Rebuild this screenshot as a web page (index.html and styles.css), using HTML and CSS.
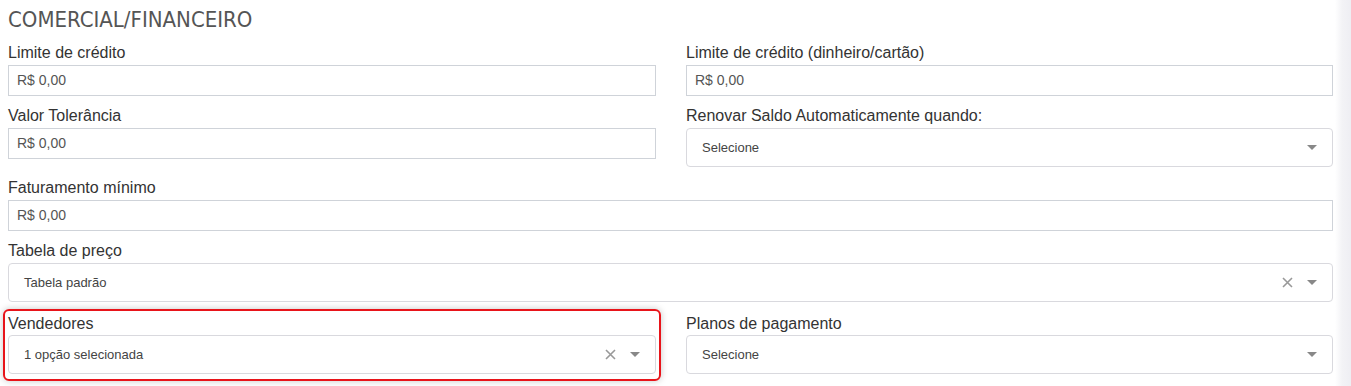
FILE: index.html
```html
<!DOCTYPE html>
<html lang="pt-BR">
<head>
<meta charset="utf-8">
<title>Comercial/Financeiro</title>
<link rel="stylesheet" href="styles.css">
</head>
<body>
<div class="page">
  <main class="content">
    <h2 class="section-title">COMERCIAL/FINANCEIRO</h2>

    <div class="row two">
      <div class="group">
        <label class="label">Limite de crédito</label>
        <div class="input">R$ 0,00</div>
      </div>
      <div class="group">
        <label class="label">Limite de crédito (dinheiro/cartão)</label>
        <div class="input">R$ 0,00</div>
      </div>
    </div>

    <div class="row two tall">
      <div class="group">
        <label class="label">Valor Tolerância</label>
        <div class="input">R$ 0,00</div>
      </div>
      <div class="group">
        <label class="label">Renovar Saldo Automaticamente quando:</label>
        <div class="select">
          <span class="select-text">Selecione</span>
          <span class="arrow"></span>
        </div>
      </div>
    </div>

    <div class="row">
      <div class="group">
        <label class="label">Faturamento mínimo</label>
        <div class="input">R$ 0,00</div>
      </div>
    </div>

    <div class="row">
      <div class="group">
        <label class="label">Tabela de preço</label>
        <div class="select">
          <span class="select-text">Tabela padrão</span>
          <svg class="clear" width="11" height="11" viewBox="0 0 11 11"><path d="M1 1L10 10M10 1L1 10" stroke="#999" stroke-width="1.6" fill="none"/></svg>
          <span class="arrow"></span>
        </div>
      </div>
    </div>

    <div class="row two last">
      <div class="group highlight">
        <label class="label">Vendedores</label>
        <div class="select">
          <span class="select-text">1 opção selecionada</span>
          <svg class="clear" width="11" height="11" viewBox="0 0 11 11"><path d="M1 1L10 10M10 1L1 10" stroke="#999" stroke-width="1.6" fill="none"/></svg>
          <span class="arrow"></span>
        </div>
      </div>
      <div class="group">
        <label class="label">Planos de pagamento</label>
        <div class="select">
          <span class="select-text">Selecione</span>
          <span class="arrow"></span>
        </div>
      </div>
    </div>
  </main>
  <div class="strip"></div>
</div>
</body>
</html>
```

FILE: styles.css
```css
* { box-sizing: border-box; }
html, body { margin: 0; padding: 0; background: #fff; }
body { font-family: "Liberation Sans", Arial, sans-serif; color: #333; }

.page { display: flex; height: 386px; overflow: hidden; }
.content { flex: 1; padding: 0 2px 0 8px; }
.strip { width: 16px; background: linear-gradient(to right, #ffffff 0, #f3f3f6 7px, #eeeef3 100%); }

.section-title {
  margin: 7px 0 10px;
  font-family: "Liberation Sans Narrow", "DejaVu Sans Condensed", sans-serif;
  font-weight: normal;
  font-size: 22px;
  line-height: 26px;
  color: #555;
}

.row { margin-bottom: 10px; }
.row.tall { margin-bottom: 11px; }
.row.two { display: grid; grid-template-columns: 648px 1fr; column-gap: 30px; align-items: start; }
.row.last { margin-top: 12px; }

.group { position: relative; }
.label { display: block; font-size: 16px; line-height: 20px; color: #333; margin-bottom: 2px; }

.input {
  height: 31px;
  border: 1px solid #cfd3d9;
  padding: 0 8px;
  font-size: 14px;
  line-height: 29px;
  color: #555;
}

.select {
  height: 39px;
  border: 1px solid #d9d9de;
  border-radius: 4px;
  padding: 0 14px 0 15px;
  display: flex;
  align-items: center;
  font-size: 13px;
  color: #444;
}
.select-text { flex: 1; }
.clear { margin-right: 14px; }
.arrow {
  width: 0; height: 0;
  border-left: 5px solid transparent;
  border-right: 5px solid transparent;
  border-top: 5px solid #888;
  margin-right: 1px;
}

.last .label { margin-bottom: 1px; }

.highlight::after {
  content: "";
  position: absolute;
  left: -5px; right: -5px; top: -5px; bottom: -7px;
  border: 2px solid #e8141a;
  border-radius: 6px;
  box-shadow: 0 0 7px rgba(0,0,0,0.22);
  pointer-events: none;
}
```
